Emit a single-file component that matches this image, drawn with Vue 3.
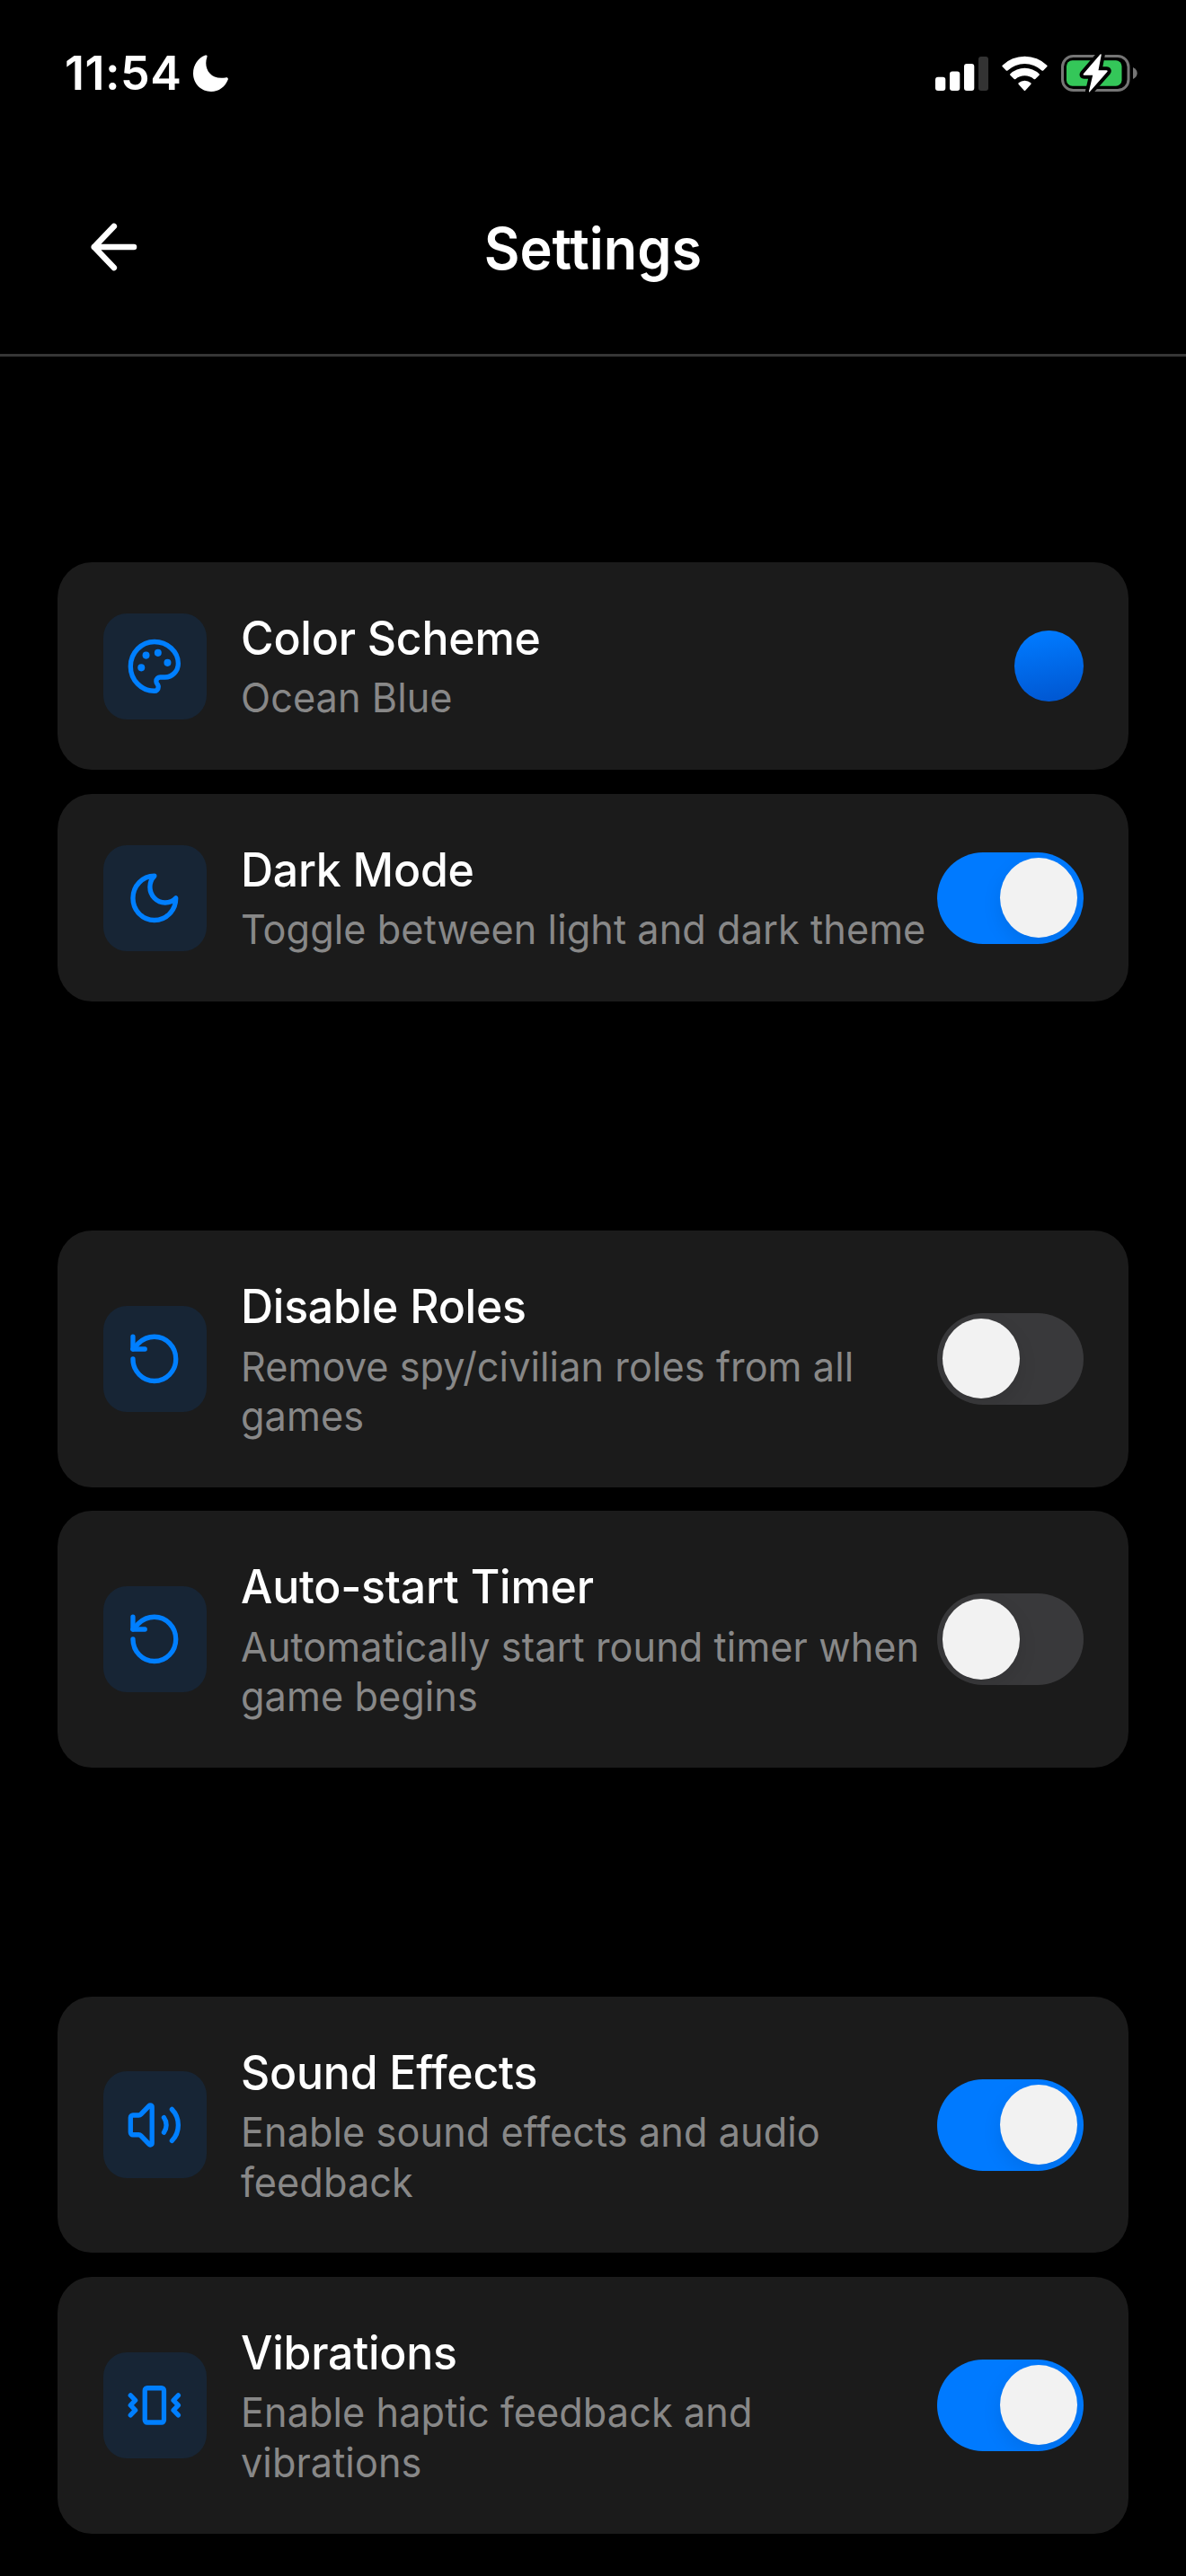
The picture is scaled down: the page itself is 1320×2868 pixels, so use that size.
<script setup>
const sections = [
  {
    name: 'appearance',
    rows: [
      { title: 'Color Scheme', desc: 'Ocean Blue', icon: 'palette', control: 'swatch' },
      { title: 'Dark Mode', desc: 'Toggle between light and dark theme', icon: 'moon', control: 'toggle', on: true },
    ],
  },
  {
    name: 'game',
    rows: [
      { title: 'Disable Roles', desc: 'Remove spy/civilian roles from all\ngames', icon: 'rotate', control: 'toggle', on: false, tall: true },
      { title: 'Auto-start Timer', desc: 'Automatically start round timer when\ngame begins', icon: 'rotate', control: 'toggle', on: false, tall: true },
    ],
  },
  {
    name: 'feedback',
    rows: [
      { title: 'Sound Effects', desc: 'Enable sound effects and audio\nfeedback', icon: 'volume', control: 'toggle', on: true, tall: true },
      { title: 'Vibrations', desc: 'Enable haptic feedback and\nvibrations', icon: 'vibrate', control: 'toggle', on: true, tall: true },
    ],
  },
]

const icons = {
  palette: {
    paths: [
      'M12 2C6.5 2 2 6.5 2 12s4.5 10 10 10c.926 0 1.648-.746 1.648-1.688 0-.437-.18-.835-.437-1.125-.29-.289-.438-.652-.438-1.125a1.64 1.64 0 0 1 1.668-1.668h1.996c3.051 0 5.555-2.503 5.555-5.554C21.965 6.012 17.461 2 12 2z',
    ],
    dots: [[13.5, 6.5], [17.5, 10.5], [8.5, 7.5], [6.5, 12.5]],
  },
  moon: { paths: ['M12 3a6 6 0 0 0 9 9 9 9 0 1 1-9-9Z'] },
  rotate: { paths: ['M3 12a9 9 0 1 0 9-9 9.75 9.75 0 0 0-6.74 2.74L3 8', 'M3 3v5h5'] },
  volume: {
    paths: [
      'M11 4.702a.705.705 0 0 0-1.203-.498L6.413 7.587A1.4 1.4 0 0 1 5.416 8H3a1 1 0 0 0-1 1v6a1 1 0 0 0 1 1h2.416a1.4 1.4 0 0 1 .997.413l3.383 3.384A.705.705 0 0 0 11 19.298z',
      'M16 9a5 5 0 0 1 0 6',
      'M19.364 18.364a9 9 0 0 0 0-12.728',
    ],
  },
  vibrate: {
    paths: [
      'm2 8 2 2-2 2 2 2-2 2',
      'm22 8-2 2 2 2-2 2 2 2',
      'M9 5h6a1 1 0 0 1 1 1v12a1 1 0 0 1-1 1H9a1 1 0 0 1-1-1V6a1 1 0 0 1 1-1z',
    ],
  },
}
</script>

<template>
  <div class="screen">
    <div class="status">
      <div class="status-left">
        <span class="clock">11:54</span>
        <svg class="focus" viewBox="0 0 39 41">
          <path d="M13.500.6C15 0 16 .8 15.500 2.300 11 15 19 28.500 36 25.400 38.200 25 39.300 26 38.700 27.800 35.500 35.800 28.500 41 20 41 9 41 0 32.200 0 20.800 0 11.500 5.500 3.600 13.500.6Z" fill="#fff" />
        </svg>
      </div>
      <div class="status-right">
        <svg class="signal" viewBox="0 0 59 38">
          <rect x="0" y="22.700" width="11.300" height="15.300" rx="3" fill="#fff" />
          <rect x="16" y="16.400" width="11.300" height="21.600" rx="3" fill="#fff" />
          <rect x="32" y="8" width="11.300" height="30" rx="3" fill="#fff" />
          <rect x="48" y="0" width="11" height="38" rx="3" fill="#333" />
        </svg>
        <svg class="wifi" viewBox="0 0 51 39.500">
          <path d="M.7 10.700A36 36 0 0 1 50.300 10.700Q51 11.500 50.300 12.300L46.200 16.500Q45.400 17.200 44.500 16.400A28 28 0 0 0 6.500 16.400Q5.600 17.200 4.800 16.500L.7 12.300Q0 11.500.7 10.700Z" fill="#fff" />
          <path d="M9.400 20.200A23.500 23.500 0 0 1 41.600 20.200Q42.400 21 41.600 21.800L37.300 26Q36.500 26.700 35.600 26A15.500 15.500 0 0 0 15.400 26Q14.500 26.700 13.700 26L9.400 21.800Q8.600 21 9.400 20.200Z" fill="#fff" />
          <path d="M18.700 30.300A10.500 10.500 0 0 1 32.300 30.300Q33 31.100 32.300 31.900L26.400 38.500Q25.500 39.500 24.600 38.500L18.700 31.900Q18 31.100 18.700 30.300Z" fill="#fff" />
        </svg>
        <svg class="battery" viewBox="0 0 86 45">
          <rect x="1.500" y="3.500" width="73.500" height="38" rx="12" fill="none" stroke="#757575" stroke-width="3" />
          <rect x="6" y="8.300" width="61.500" height="28.400" rx="6.500" fill="#34c759" />
          <path d="M80 16c3 1.200 4.700 3.700 4.700 6.500s-1.700 5.300-4.700 6.500z" fill="#757575" />
          <path d="M43.500 1.600 25 23q-1.200 1.700.8 1.700h9.400L31 42.500q-.4 1.800 1 .4L51.300 21q1.200-1.700-.8-1.700h-9L44.700 2.500q.3-2-1.200-.9z" fill="#fff" stroke="#000" stroke-width="8" stroke-linejoin="round" paint-order="stroke" />
        </svg>
      </div>
    </div>

    <header class="header">
      <svg class="back" viewBox="0 0 52 54" fill="none" stroke="#fff" stroke-width="6.600" stroke-linecap="round" stroke-linejoin="round">
        <path d="M25.800 4 3.800 27l22 23M3.800 27H48" />
      </svg>
      <h1 class="heading">Settings</h1>
    </header>

    <main class="content">
      <section v-for="section in sections" :key="section.name" class="section">
        <div v-for="row in section.rows" :key="row.title" class="card" :class="{ tall: row.tall }">
          <div class="tile">
            <svg class="glyph" viewBox="0 0 24 24" preserveAspectRatio="none">
              <path v-for="(d, i) in icons[row.icon].paths" :key="i" :d="d" />
              <circle v-for="([x, y], i) in icons[row.icon].dots" :key="'dot' + i" class="dot" :cx="x" :cy="y" r="1.5" />
            </svg>
          </div>
          <div class="copy">
            <div class="title">{{ row.title }}</div>
            <div class="desc">{{ row.desc }}</div>
          </div>
          <div v-if="row.control === 'swatch'" class="swatch"></div>
          <div v-else class="toggle" :class="{ on: row.on }"><div class="knob"></div></div>
        </div>
      </section>
    </main>
  </div>
</template>

<style>
body {
  margin: 0;
  background: #000;
}
</style>

<style scoped>
.screen {
  width: 1320px;
  height: 2868px;
  overflow: hidden;
  box-sizing: border-box;
  background: #000;
  color: #fff;
  font-family: Inter, "Liberation Sans", sans-serif;
}
.status {
  display: flex;
  justify-content: space-between;
  align-items: center;
  height: 163px;
  padding: 0 53px 0 72px;
  box-sizing: border-box;
}
.status-left {
  display: flex;
  align-items: center;
  gap: 13px;
}
.clock {
  width: 130px;
  font-size: 52px;
  line-height: 64px;
  font-weight: 600;
  letter-spacing: 0.5px;
  white-space: nowrap;
}
.focus {
  width: 39px;
  height: 41px;
}
.status-right {
  display: flex;
  align-items: center;
}
.signal {
  width: 59px;
  height: 38px;
}
.wifi {
  width: 51px;
  height: 39.5px;
  margin: 0 15px;
}
.battery {
  width: 86px;
  height: 45px;
}
.header {
  display: grid;
  grid-template-columns: 1fr auto 1fr;
  align-items: center;
  height: 234px;
  padding: 0 101px 8px;
  box-sizing: border-box;
  border-bottom: 3px solid #363636;
}
.back {
  width: 52px;
  height: 54px;
}
.heading {
  margin: 4px 0 0;
  font-size: 64px;
  line-height: 78px;
  font-weight: 600;
  transform: scaleX(0.955);
}
.content {
  display: flex;
  flex-direction: column;
  gap: 255px;
  padding: 228.6px 64px 0;
}
.section {
  display: flex;
  flex-direction: column;
  gap: 26.6px;
}
.card {
  display: flex;
  align-items: center;
  height: 231.4px;
  padding: 1px 50.5px 0 51px;
  box-sizing: border-box;
  background: #1b1b1b;
  border-radius: 38px / 40px;
}
.card.tall {
  height: 285.6px;
  padding-top: 0;
}
.tile {
  display: flex;
  flex: none;
  align-items: center;
  justify-content: center;
  width: 114.5px;
  height: 118.4px;
  border-radius: 26px / 27px;
  background: #172535;
}
.glyph {
  width: 63.7px;
  height: 65.8px;
  fill: none;
  stroke: #007fff;
  stroke-width: 2;
  stroke-linecap: round;
  stroke-linejoin: round;
}
.dot {
  fill: #007fff;
  stroke: none;
}
.copy {
  flex: 1;
  min-width: 0;
  margin-left: 38.5px;
  transform: scaleX(0.961);
  transform-origin: left center;
}
.tall .copy {
  margin-top: 2px;
}
.title {
  margin-bottom: 6.5px;
  font-size: 52px;
  line-height: 64px;
  font-weight: 500;
  letter-spacing: -0.25px;
  white-space: nowrap;
}
.desc {
  font-size: 45px;
  line-height: 55.5px;
  letter-spacing: 0.07px;
  color: #888;
  white-space: pre;
}
.swatch {
  flex: none;
  width: 76.7px;
  height: 79.4px;
  border-radius: 50%;
  background: linear-gradient(170deg, #007aff 8%, #0056d0 96%);
}
.toggle {
  display: flex;
  flex: none;
  align-items: center;
  width: 163px;
  height: 102px;
  padding: 0 6.3px;
  box-sizing: border-box;
  border-radius: 51px;
  overflow: hidden;
  background: #39393b;
}
.toggle.on {
  justify-content: flex-end;
  background: #007aff;
}
.knob {
  width: 86.4px;
  height: 89.2px;
  border-radius: 50%;
  background: #f2f2f2;
  box-shadow: 0 8px 22px rgba(0, 0, 0, 0.09);
}
</style>
